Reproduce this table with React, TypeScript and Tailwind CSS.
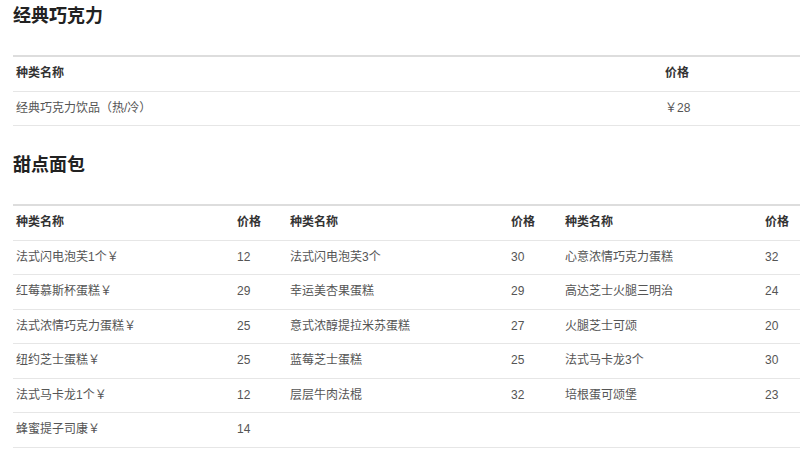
import React from "react";

const font = { fontFamily: '"Liberation Sans", "Noto Sans CJK SC", sans-serif' };

const rows: [string, string, string, string, string, string][] = [
  ["法式闪电泡芙1个￥", "12", "法式闪电泡芙3个", "30", "心意浓情巧克力蛋糕", "32"],
  ["红莓慕斯杯蛋糕￥", "29", "幸运美杏果蛋糕", "29", "高达芝士火腿三明治", "24"],
  ["法式浓情巧克力蛋糕￥", "25", "意式浓醇提拉米苏蛋糕", "27", "火腿芝士可颂", "20"],
  ["纽约芝士蛋糕￥", "25", "蓝莓芝士蛋糕", "25", "法式马卡龙3个", "30"],
  ["法式马卡龙1个￥", "12", "层层牛肉法棍", "32", "培根蛋可颂堡", "23"],
  ["蜂蜜提子司康￥", "14", "", "", "", ""],
];

const th = "text-left font-bold text-[#333] text-[12px] leading-[17.5px] py-[8px] pl-[3px] pr-0 border-b border-[#e6e6e6]";
const td = "text-left text-[#555] text-[12px] leading-[17.5px] py-[8px] pl-[3px] pr-0 border-b border-[#e6e6e6] whitespace-nowrap";

export default function App() {
  return (
    <div className="w-[800px] h-[449px] overflow-hidden bg-white" style={font}>
      <div className="pl-[13px] w-[835px]">
        <h3 className="text-[18px] leading-[20px] font-bold text-[#222] mt-[6px] mb-[29px]">经典巧克力</h3>
        <table className="w-[822px] table-fixed border-collapse border-t-2 border-[#dddddd]">
          <colgroup>
            <col className="w-[649px]" />
            <col className="w-[173px]" />
          </colgroup>
          <thead>
            <tr>
              <th className={th}>种类名称</th>
              <th className={th}>价格</th>
            </tr>
          </thead>
          <tbody>
            <tr>
              <td className={td}>经典巧克力饮品（热/冷）</td>
              <td className={td}>￥28</td>
            </tr>
          </tbody>
        </table>

        <h3 className="text-[18px] leading-[20px] font-bold text-[#222] mt-[29px] mb-[29px]">甜点面包</h3>
        <table className="w-[822px] table-fixed border-collapse border-t-2 border-[#dddddd]">
          <colgroup>
            <col className="w-[221px]" />
            <col className="w-[53px]" />
            <col className="w-[221px]" />
            <col className="w-[54px]" />
            <col className="w-[200px]" />
            <col className="w-[73px]" />
          </colgroup>
          <thead>
            <tr>
              <th className={th}>种类名称</th>
              <th className={th}>价格</th>
              <th className={th}>种类名称</th>
              <th className={th}>价格</th>
              <th className={th}>种类名称</th>
              <th className={th}>价格</th>
            </tr>
          </thead>
          <tbody>
            {rows.map((r, i) => (
              <tr key={i}>
                {r.map((c, j) => (
                  <td key={j} className={td}>
                    {c}
                  </td>
                ))}
              </tr>
            ))}
          </tbody>
        </table>
      </div>
    </div>
  );
}
